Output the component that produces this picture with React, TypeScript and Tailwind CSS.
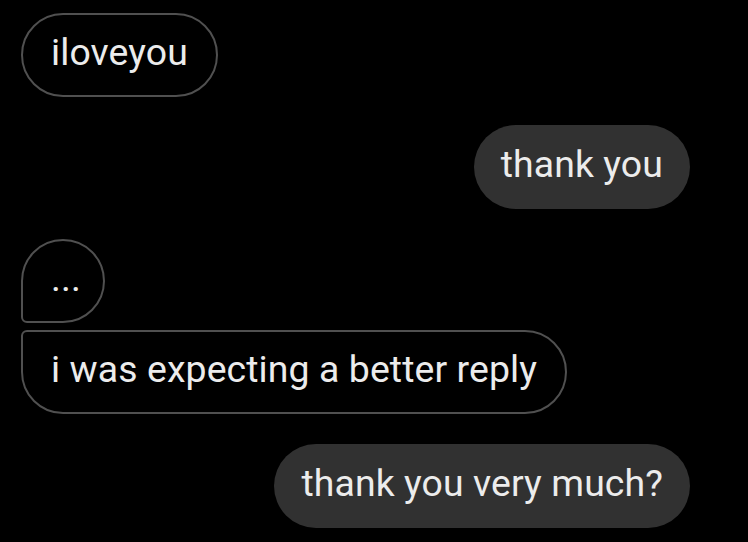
import React from 'react';

type Msg = { text: string; side: 'in' | 'out'; shape?: 'top' | 'bottom' };

const messages: Msg[] = [
  { text: 'iloveyou', side: 'in' },
  { text: 'thank you', side: 'out' },
  { text: '...', side: 'in', shape: 'top' },
  { text: 'i was expecting a better reply', side: 'in', shape: 'bottom' },
  { text: 'thank you very much?', side: 'out' },
];

const Bubble = ({ msg }: { msg: Msg }) => {
  const base =
    'h-[84px] flex items-center text-[37.4px] leading-none text-[#ececec] tracking-[0.1px]';
  if (msg.side === 'out') {
    return (
      <div className={`${base} self-end bg-[#313131] rounded-full px-[27px]`}>
        <span className="pb-[4px]">{msg.text}</span>
      </div>
    );
  }
  const corners =
    msg.shape === 'top'
      ? 'rounded-[42px] rounded-bl-[6px] w-[84px] h-[83px]'
      : msg.shape === 'bottom'
        ? 'rounded-[42px] rounded-tl-[6px] h-[82px]'
        : 'rounded-full';
  return (
    <div className={`${base} ${corners} self-start border-2 border-[#505050] px-[28px]`}>
      <span className="pb-[4px]">{msg.text}</span>
    </div>
  );
};

export default function App() {
  return (
    <div
      className="w-[748px] h-[542px] bg-black overflow-hidden flex flex-col pt-[13px] pl-[21px] pr-[58px]"
      style={{ fontFamily: 'Roboto, "Noto Sans", sans-serif' }}
    >
      <Bubble msg={messages[0]} />
      <div className="h-[28px]" />
      <Bubble msg={messages[1]} />
      <div className="h-[30px]" />
      <Bubble msg={messages[2]} />
      <div className="h-[7px]" />
      <Bubble msg={messages[3]} />
      <div className="h-[30px]" />
      <Bubble msg={messages[4]} />
    </div>
  );
}
